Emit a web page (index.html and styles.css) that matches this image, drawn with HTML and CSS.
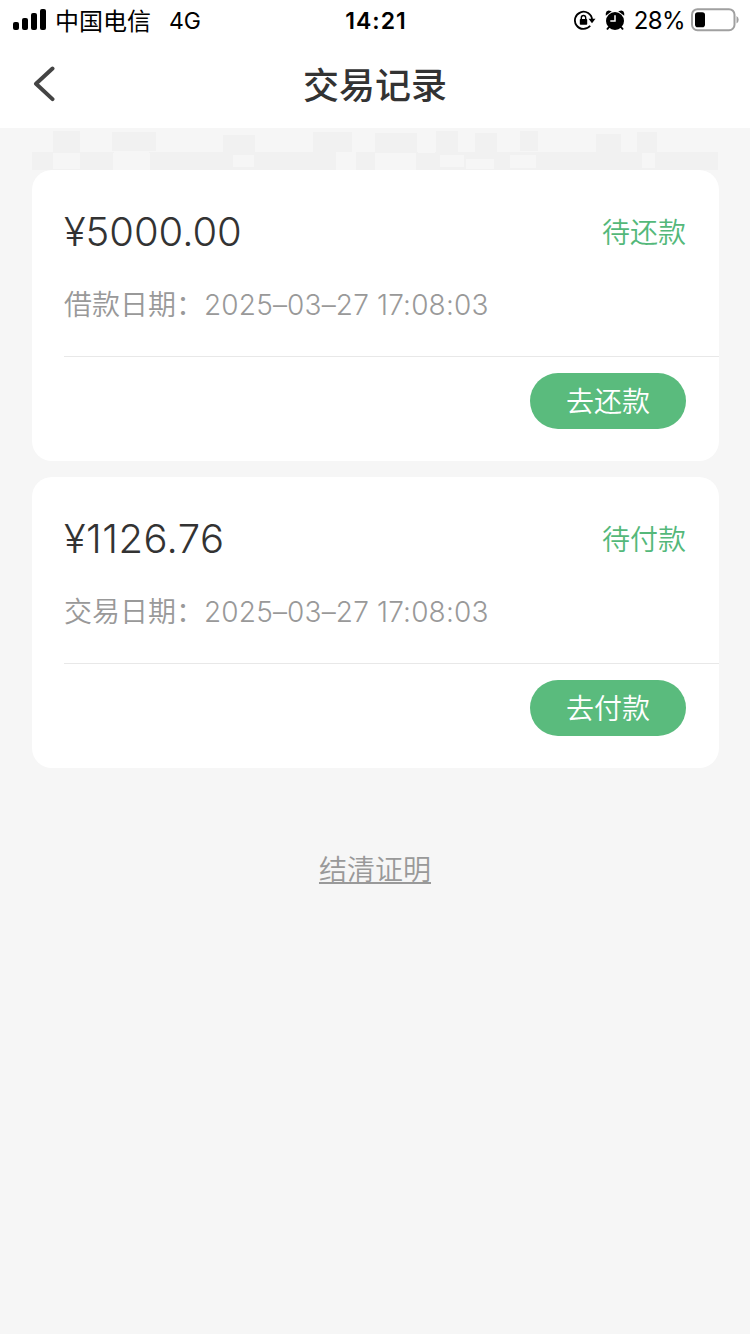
FILE: index.html
```html
<!DOCTYPE html>
<html lang="zh-CN">
<head>
<meta charset="utf-8">
<title>交易记录</title>
<link rel="stylesheet" href="styles.css">
</head>
<body>
<header class="top">
  <div class="status">
    <div class="status-left">
      <svg class="signal" width="34" height="22" viewBox="0 0 34 22"><rect x="0" y="13" width="6" height="8" rx="2"/><rect x="9" y="9" width="6" height="12" rx="2"/><rect x="18" y="4" width="6" height="17" rx="2"/><rect x="27" y="0" width="6" height="21" rx="2"/></svg>
      <span class="carrier">中国电信</span>
      <span class="network">4G</span>
    </div>
    <span class="clock">14:21</span>
    <div class="status-right">
      <svg class="lock" width="22" height="20" viewBox="0 0 22 20"><path d="M16.2 15.8A8.6 8.6 0 1 1 18.1 9.6" fill="none" stroke="#000" stroke-width="1.8"/><path d="M14.5 8.8h7l-3.5 4.4z"/><rect x="5.8" y="9" width="7.4" height="5.8" rx=".8"/><path d="M7.3 9.5V7.7a2.2 2.2 0 0 1 4.4 0v1.8" fill="none" stroke="#000" stroke-width="1.4"/></svg>
      <svg class="alarm" width="20" height="21" viewBox="0 0 20 21"><circle cx="10" cy="11" r="9"/><path d="M.8 5.8V3.2Q1.2 1 3.6.6L6.8 1.2zM19.2 5.8V3.2Q18.8 1 16.4.6L13.2 1.2z"/><path d="M4 17l-2 2.5M16 17l2 2.5" stroke="#000" stroke-width="2"/><path d="M10 5.2V11H5.3" fill="none" stroke="#fff" stroke-width="1.5"/></svg>
      <span class="percent">28%</span>
      <svg class="battery" width="48" height="24" viewBox="0 0 48 24"><rect x="1" y="1.2" width="42.5" height="21" rx="5.5" fill="#fff" stroke="#a0a0a0" stroke-width="2"/><rect x="4" y="4.2" width="10" height="15" rx="2.8"/><path d="M45.5 8v7.5q2.2-1 2.2-3.7T45.5 8z" fill="#a0a0a0"/></svg>
    </div>
  </div>
  <div class="nav">
    <svg class="back" width="24" height="36" viewBox="0 0 24 36"><path d="M20.5 2.5L4 17.7l16.5 15.4" fill="none" stroke="#444" stroke-width="4" stroke-linecap="round" stroke-linejoin="round"/></svg>
    <h1 class="title">交易记录</h1>
  </div>
</header>
<svg class="mosaic" width="750" height="42" viewBox="0 0 750 42">
  <g fill="#f1f1f1"><rect x="53" y="3" width="27" height="21"/><rect x="112" y="4" width="44" height="19"/><rect x="223" y="7" width="32" height="17"/><rect x="313" y="4" width="39" height="20"/><rect x="375" y="5" width="42" height="19"/><rect x="436" y="3" width="22" height="21"/><rect x="475" y="5" width="22" height="19"/><rect x="520" y="3" width="18" height="20"/><rect x="596" y="6" width="25" height="18"/><rect x="637" y="4" width="20" height="20"/><rect x="32" y="24" width="82" height="18"/><rect x="149" y="24" width="187" height="18"/><rect x="356" y="24" width="362" height="18"/></g>
  <g fill="#f6f6f6"><rect x="53" y="25" width="27" height="16"/><rect x="113" y="25" width="37" height="17"/><rect x="156" y="3" width="62" height="20"/><rect x="255" y="4" width="56" height="19"/><rect x="233" y="27" width="21" height="12"/><rect x="375" y="25" width="41" height="17"/><rect x="418" y="5" width="17" height="20"/><rect x="458" y="6" width="16" height="17"/><rect x="498" y="7" width="18" height="15"/><rect x="542" y="4" width="36" height="18"/><rect x="622" y="5" width="13" height="18"/><rect x="440" y="27" width="24" height="12"/><rect x="466" y="31" width="28" height="10"/><rect x="510" y="27" width="26" height="13"/><rect x="642" y="25" width="13" height="15"/></g>
</svg>
<main class="list">
  <section class="card">
    <div class="row"><span class="amount">¥5000.00</span><span class="state">待还款</span></div>
    <div class="date"><span class="label">借款日期：</span><span class="stamp">2025–03–27 17:08:03</span></div>
    <div class="action"><button class="pay">去还款</button></div>
  </section>
  <section class="card">
    <div class="row"><span class="amount amount-second">¥1126.76</span><span class="state">待付款</span></div>
    <div class="date"><span class="label">交易日期：</span><span class="stamp">2025–03–27 17:08:03</span></div>
    <div class="action"><button class="pay">去付款</button></div>
  </section>
</main>
<footer class="foot"><a class="proof">结清证明</a></footer>
</body>
</html>
```
FILE: styles.css
```css
* { box-sizing: border-box; }
body {
  margin: 0;
  min-height: 1334px;
  background: #f6f6f6;
  font-family: Inter, "Noto Sans CJK SC", sans-serif;
  color: #333;
}
svg { display: block; flex: none; }
.top { height: 128px; background: #fff; }
.status {
  display: grid;
  grid-template-columns: 1fr auto 1fr;
  align-items: center;
  height: 40px;
  padding: 0 11px 0 13px;
  color: #000;
  line-height: 38px;
}
.status-left, .status-right { display: flex; align-items: center; height: 40px; }
.status-right { justify-content: flex-end; }
.carrier { margin-left: 8px; font: 24px/40px "Noto Sans CJK SC", sans-serif; }
.network { margin-left: 18px; padding-top: 2px; font-size: 23px; }
.clock { padding-top: 2px; font-size: 23px; font-weight: 600; letter-spacing: 1px; }
.alarm { margin-left: 9px; }
.percent { margin-left: 9px; padding-top: 2px; font-size: 24px; letter-spacing: -.6px; }
.battery { margin-left: 6px; }
.nav {
  display: grid;
  grid-template-columns: 1fr auto 1fr;
  align-items: center;
  height: 88px;
  padding: 0 32px;
}
.title { margin: 0; padding-bottom: 3px; font: 500 36px/52px "Noto Sans CJK SC", sans-serif; }
.mosaic { filter: blur(.6px); }
.list { display: flex; flex-direction: column; gap: 16px; padding: 0 31px 0 32px; }
.card { height: 291px; padding-left: 32px; border-radius: 20px; background: #fff; }
.row {
  display: flex;
  justify-content: space-between;
  height: 124px;
  padding: 32px 33px 0 0;
}
.amount { font-size: 40px; font-weight: 350; line-height: 60px; letter-spacing: -.05px; }
.amount-second { letter-spacing: .45px; }
.state { font-size: 28px; font-weight: 350; line-height: 62px; color: #54b87a; }
.date {
  display: flex;
  height: 63px;
  color: #999;
  font-size: 28px;
  font-weight: 350;
  line-height: 22px;
  border-bottom: 1px solid #e8e8e8;
}
.label { width: 140px; }
.stamp { letter-spacing: .16px; }
.action { display: flex; justify-content: flex-end; padding: 16px 33px 0 0; }
.pay {
  width: 156px;
  height: 56px;
  padding: 0 0 3px;
  border: 0;
  border-radius: 28px;
  background: #5abb7d;
  color: #fff;
  font-family: "Noto Sans CJK SC", sans-serif;
  font-size: 28px;
  font-weight: 350;
  line-height: 52px;
}
.foot { display: flex; justify-content: center; padding-top: 80px; }
.proof {
  font-family: "Noto Sans CJK SC", sans-serif;
  font-size: 28px;
  font-weight: 350;
  line-height: 41px;
  color: #999;
  text-decoration: underline;
}
```
